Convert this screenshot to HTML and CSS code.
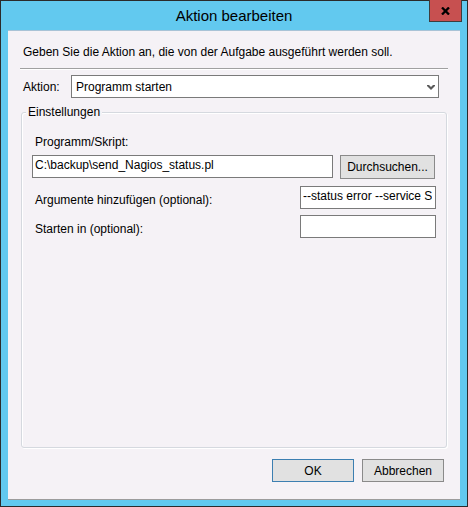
FILE: index.html
```html
<!DOCTYPE html>
<html lang="de">
<head>
<meta charset="utf-8">
<title>Aktion bearbeiten</title>
<link rel="stylesheet" href="styles.css">
</head>
<body>
<div class="window">
  <div class="titlebar">Aktion bearbeiten</div>
  <div class="close" aria-label="Schließen">
    <svg width="9" height="8" viewBox="0 0 9 8"><path d="M1 0.5 L8 7.5 M8 0.5 L1 7.5" stroke="#000" stroke-width="2.3" fill="none"/></svg>
  </div>
  <div class="dialog">
    <p class="intro">Geben Sie die Aktion an, die von der Aufgabe ausgeführt werden soll.</p>
    <div class="separator"></div>
    <div class="action-row">
      <span class="action-label">Aktion:</span>
      <div class="select">
        <span>Programm starten</span>
        <svg class="chevron" width="8" height="5" viewBox="0 0 8 5"><polygon points="0,0 2,0 4,2 6,0 8,0 8,1 4,5 0,1" fill="#5a5a5a"/></svg>
      </div>
    </div>
    <div class="group">
      <span class="legend">Einstellungen</span>
      <span class="field-label">Programm/Skript:</span>
      <div class="path-row">
        <div class="textbox path-box"><span class="textbox-value">C:\backup\send_Nagios_status.pl</span></div>
        <div class="button browse">Durchsuchen...</div>
      </div>
      <div class="field-row args-row">
        <span class="row-label">Argumente hinzufügen (optional):</span>
        <div class="textbox small-box"><span class="textbox-value">--status error --service Scheduler</span></div>
      </div>
      <div class="field-row start-row">
        <span class="row-label">Starten in (optional):</span>
        <div class="textbox small-box"><span class="textbox-value"></span></div>
      </div>
    </div>
    <div class="footer">
      <div class="button ok">OK</div>
      <div class="button">Abbrechen</div>
    </div>
  </div>
</div>
</body>
</html>
```

FILE: styles.css
```css
* {
  box-sizing: border-box;
}

html,
body {
  margin: 0;
  padding: 0;
}

body {
  font-family: "Liberation Sans", Arial, sans-serif;
  font-size: 12px;
  line-height: 16px;
  color: #000;
  background: #62c9ef;
}

.window {
  position: relative;
  width: 468px;
  height: 507px;
  border: 1px solid #2b2b2b;
  background: #62c9ef;
  padding: 0 7px 6px;
  display: flex;
  flex-direction: column;
}

.titlebar {
  height: 29px;
  line-height: 29px;
  font-size: 15px;
  text-align: center;
}

.close {
  position: absolute;
  left: 428px;
  top: -1px;
  width: 33px;
  height: 22px;
  background: #c75050;
  border: 1px solid #3d3d3d;
  border-top: none;
  display: flex;
  align-items: center;
  justify-content: center;
}

.close svg {
  display: block;
  margin-top: 1px;
}

.dialog {
  flex: 1;
  background: #f5f2f6;
  border-top: 1px solid #a9c3d6;
  border-bottom: 1px solid #9c9c9c;
  display: flex;
  flex-direction: column;
}

.intro {
  margin: 13px 0 0;
  padding-left: 15px;
}

.separator {
  margin: 8px 12px 0;
  height: 2px;
  border-top: 1px solid #a0a0a0;
  border-bottom: 1px solid #fff;
}

.action-row {
  margin-top: 5px;
  padding-left: 15px;
  display: flex;
  align-items: flex-start;
}

.action-label {
  width: 48px;
  margin-top: 4px;
}

.select {
  width: 368px;
  height: 23px;
  border: 1px solid #7a7a7a;
  background: #fff;
  padding: 3px 3px 2px 4px;
  display: flex;
  align-items: center;
  justify-content: space-between;
}

.chevron {
  display: block;
  margin-top: 1px;
}

.group {
  flex: 1;
  margin: 14px 13px 0;
  border: 1px solid #d5d9df;
  border-radius: 3px;
  box-shadow: 1px 1px 0 #fff, inset 1px 1px 0 #fff;
  display: flex;
  flex-direction: column;
  align-items: flex-start;
}

.legend {
  margin: -8px 0 0 4px;
  padding: 0 2px;
  line-height: 15px;
  background: #f5f2f6;
}

.field-label {
  margin: 14px 0 0 13px;
}

.path-row {
  margin: 5px 0 0 10px;
  display: flex;
  gap: 7px;
  align-items: flex-start;
}

.textbox {
  height: 23px;
  border: 1px solid #7a7a7a;
  background: #fff;
  padding: 1px 3px 4px 2px;
  white-space: nowrap;
}

.textbox-value {
  display: block;
  overflow: hidden;
  height: 16px;
}

.path-box {
  width: 301px;
}

.button {
  height: 23px;
  background: #e1e1e1;
  border: 1px solid #8a8a8a;
  text-align: center;
  padding-top: 3px;
  white-space: nowrap;
}

.browse {
  width: 95px;
  height: 24px;
}

.field-row {
  align-self: stretch;
  display: flex;
  justify-content: space-between;
  align-items: flex-start;
  padding: 0 10px 0 13px;
}

.row-label {
  margin-top: 6px;
}

.small-box {
  width: 136px;
}

.args-row {
  margin-top: 7px;
}

.start-row {
  margin-top: 6px;
}

.footer {
  display: flex;
  justify-content: flex-end;
  gap: 8px;
  margin: 11px 16px 17px 0;
}

.footer .button {
  width: 82px;
}

.ok {
  border-color: #3c7fb1;
}
```
